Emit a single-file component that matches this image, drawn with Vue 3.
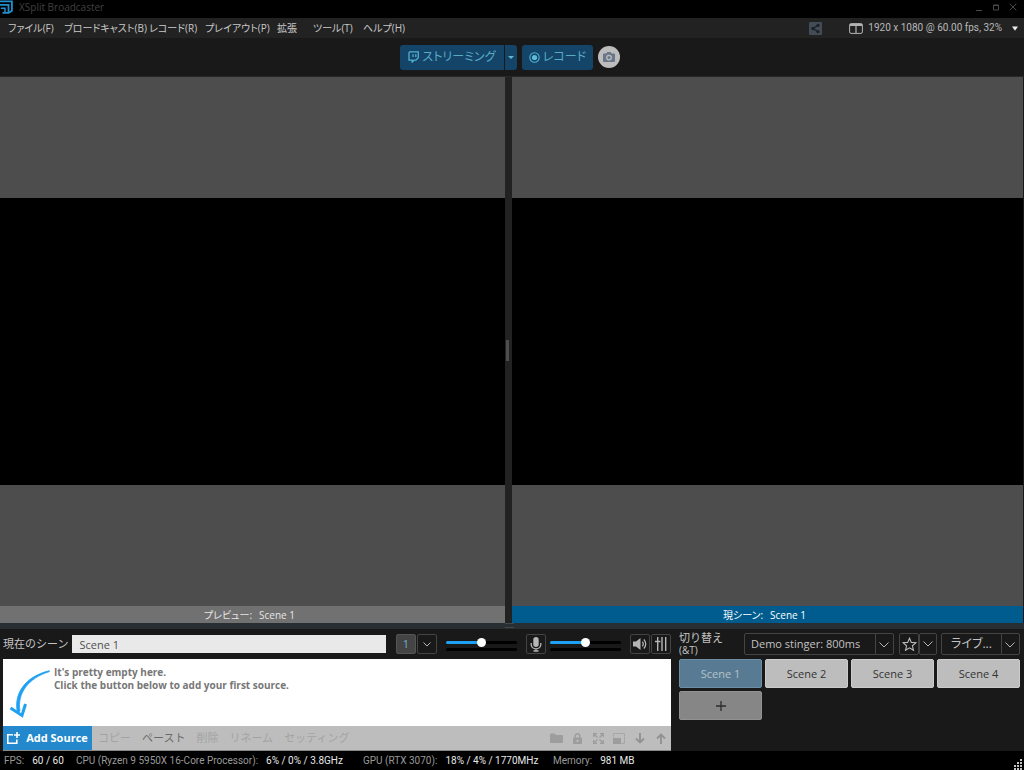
<script setup>
import { ref } from 'vue'

const menus = ['ファイル(F)', 'ブロードキャスト(B)', 'レコード(R)', 'プレイアウト(P)', '拡張', 'ツール(T)', 'ヘルプ(H)']
const scenes = ['Scene 1', 'Scene 2', 'Scene 3', 'Scene 4']
const current = ref('Scene 1')
const mic = ref(50)
const speaker = ref(50)
const actions = [
  { name: 'コピー', enabled: false },
  { name: 'ペースト', enabled: true },
  { name: '削除', enabled: false },
  { name: 'リネーム', enabled: false },
  { name: 'セッティング', enabled: false }
]
const stats = [
  { name: 'FPS:', value: '60 / 60' },
  { name: 'CPU (Ryzen 9 5950X 16-Core Processor):', value: '6% / 0% / 3.8GHz' },
  { name: 'GPU (RTX 3070):', value: '18% / 4% / 1770MHz' },
  { name: 'Memory:', value: '981 MB' }
]
</script>

<template>
  <div class="app">
    <header class="titlebar">
      <svg class="logo" width="13" height="14" viewBox="0 0 13 14" fill="none" stroke="#2190cf" stroke-width="1.8">
        <path d="M0 1.400h11.900v9.400L8.800 12.900H2.500" />
        <path d="M0 4.900h8.500v8" />
        <path d="M.8 8.300h4.200v4.600" stroke-width="1.500" />
      </svg>
      <span class="title">XSplit Broadcaster</span>
      <div class="window-buttons">
        <button aria-label="Minimize"><svg width="8" height="8" viewBox="0 0 8 8"><path d="M1 7.5h6" /></svg></button>
        <button aria-label="Maximize"><svg width="8" height="8" viewBox="0 0 8 8"><path d="M1.5 2h5v5h-5zM1 2.5h6" /></svg></button>
        <button aria-label="Close"><svg width="8" height="8" viewBox="0 0 8 8"><path d="M.7 .7l6.6 6.6M7.3 .7L.7 7.3" /></svg></button>
      </div>
    </header>

    <nav class="menubar">
      <div class="menus">
        <button v-for="m in menus" :key="m">{{ m }}</button>
      </div>
      <button class="share" aria-label="Share">
        <svg width="13" height="13" viewBox="0 0 13 13"><rect width="13" height="13" rx="1" fill="#434c56" /><path d="M9 3.2L4 6.5l5 3.3" fill="none" stroke="#1c2126" stroke-width="1.3" /><g fill="#1c2126"><circle cx="9" cy="3.3" r="1.6" /><circle cx="4" cy="6.5" r="1.7" /><circle cx="9" cy="9.7" r="1.6" /></g></svg>
      </button>
      <button class="resolution">
        <svg width="14" height="11" viewBox="0 0 14 11" fill="none" stroke="#b4b4b4"><rect x=".6" y=".6" width="12.8" height="9.8" rx="1.5" /><path d="M1 2h12" stroke-width="2" /><path d="M7 2v8" stroke-width="1.2" /></svg>
        <span>1920 x 1080 @ 60.00 fps, 32%</span>
        <svg width="6" height="5" viewBox="0 0 6 5"><path d="M0 .5h6L3 4.8z" fill="#eee" /></svg>
      </button>
    </nav>

    <div class="toolbar">
      <div class="split">
        <button class="blue stream">
          <svg width="11" height="12" viewBox="0 0 11 12" fill="none" stroke="#4fb0d0" stroke-width="1.3"><path d="M1.600 .8h8.700v6L7.900 9.200H6L4.200 11V9.200H1V2z" /><path d="M5 3.200v2.900M7.800 3.200v2.900" /></svg>
          <span>ストリーミング</span>
        </button>
        <button class="blue stream-menu" aria-label="ストリーミングのメニュー"><svg width="6" height="3" viewBox="0 0 6 3"><path d="M0 0h6L3 3z" fill="#62b6d2" /></svg></button>
      </div>
      <button class="blue record">
        <svg width="11" height="11" viewBox="0 0 11 11"><circle cx="5.5" cy="5.5" r="4.7" fill="none" stroke="#4fb0d0" stroke-width="1.1" /><circle cx="5.5" cy="5.5" r="2.6" fill="#5dbbd9" /></svg>
        <span>レコード</span>
      </button>
      <button class="camera" aria-label="Screenshot">
        <svg width="12" height="10" viewBox="0 0 12 10"><path d="M1 1.6h2.4L4.2 0h3.6l.8 1.6H11q1 0 1 1V9q0 1-1 1H1Q0 10 0 9V2.600q0-1 1-1z" fill="#6a7788" /><circle cx="6" cy="5.600" r="2.300" fill="#6a7788" stroke="#bdbdbd" stroke-width="1.300" /></svg>
      </button>
    </div>

    <main class="stage">
      <section class="view preview">
        <div class="canvas"><div class="video"></div></div>
        <div class="caption">プレビュー:<span>Scene 1</span></div>
      </section>
      <div class="divider"><i></i></div>
      <section class="view live">
        <div class="canvas"><div class="video"></div></div>
        <div class="caption">現シーン:<span>Scene 1</span></div>
      </section>
    </main>
    <div class="hsplit"><i></i></div>

    <div class="bottom">
      <section class="sources">
        <div class="controls">
          <label for="scene-name">現在のシーン</label>
          <input id="scene-name" class="scene-name" type="text" value="Scene 1" />
          <div class="joined">
            <button class="box number">1</button>
            <button class="box" aria-label="More"><svg width="8" height="5" viewBox="0 0 8 5"><path class="chevron" d="M.5 .5L4 4 7.500 .5" /></svg></button>
          </div>
          <div class="volume">
            <input v-model="mic" type="range" aria-label="Microphone volume" :style="{ '--level': mic + '%' }" />
            <div class="level"></div>
          </div>
          <button class="box mic" aria-label="Microphone">
            <svg width="12" height="15" viewBox="0 0 12 15"><rect x="3.300" width="5.400" height="10" rx="2.700" fill="#b5b5b5" /><path d="M1.200 6v1.500a4.800 4.300 0 0 0 9.600 0V6M6 11.800V14M3.500 14h5" fill="none" stroke="#b5b5b5" stroke-width="1.300" /></svg>
          </button>
          <div class="volume speaker-volume">
            <input v-model="speaker" type="range" aria-label="Speaker volume" :style="{ '--level': speaker + '%' }" />
            <div class="level"></div>
          </div>
          <div class="joined">
            <button class="box" aria-label="Speaker">
              <svg width="15" height="12" viewBox="0 0 15 12"><path d="M0 3.600h3L7.500 0v12L3 8.400H0z" fill="#b5b5b5" /><path d="M9.300 3.800a3 3 0 0 1 0 4.400M10.800 1.600a6 6 0 0 1 0 8.800" fill="none" stroke="#b5b5b5" stroke-width="1.300" /></svg>
            </button>
            <button class="box" aria-label="Mixer">
              <svg width="12" height="14" viewBox="0 0 12 14" fill="none" stroke="#b5b5b5" stroke-width="1.400"><path d="M2.700 0v14M7 0v14M10.700 0v14M0 4.500h5.400" /></svg>
            </button>
          </div>
        </div>

        <div class="list">
          <div class="empty">
            <svg width="42" height="48" viewBox="0 0 42 48" fill="none" stroke="#1ea1f2" stroke-linecap="round"><path d="M41 .8C19 6 5 22 9.500 43L12 41C9 24 20 8 41 1.800z" fill="#1ea1f2" stroke-width=".8" /><path d="M2.500 38L14 45.500 17.500 34" stroke-width="3" stroke-linecap="butt" /></svg>
            <p>It's pretty empty here.<br />Click the button below to add your first source.</p>
          </div>
          <div class="actions">
            <button class="add">
              <svg width="13" height="13" viewBox="0 0 13 13" fill="none" stroke="#fff" stroke-width="1.600"><path d="M6 2.800H.8v8.400h9V7.500M10 0v6M7 3h6" /></svg>
              <span>Add Source</span>
            </button>
            <button v-for="a in actions" :key="a.name" class="act" :disabled="!a.enabled">{{ a.name }}</button>
            <div class="tools">
              <button disabled aria-label="Group"><svg width="13" height="11" viewBox="0 0 13 11"><path d="M0 1.500Q0 .5 1 .5h3.500L6 2h6q1 0 1 1v6q0 1-1 1H1q-1 0-1-1z" /></svg></button>
              <button disabled aria-label="Lock"><svg width="9" height="11" viewBox="0 0 9 11"><path d="M2.200 5V3a2.300 2.300 0 0 1 4.600 0v2" fill="none" stroke="#9d9d9d" stroke-width="1.500" /><path fill-rule="evenodd" d="M1 4.500h7q1 0 1 1V10q0 1-1 1H1q-1 0-1-1V5.500q0-1 1-1zM3.500 7h2v2h-2z" /></svg></button>
              <button disabled aria-label="Expand"><svg width="11" height="11" viewBox="0 0 11 11" fill="none" stroke="#9d9d9d" stroke-width="1.300"><path d="M.7 4V.7H4M7 .7h3.300V4M10.300 7v3.300H7M4 10.300H.7V7M1 1l3.500 3.500M10 1L6.500 4.500M10 10L6.500 6.500M1 10l3.500-3.500" /></svg></button>
              <button disabled aria-label="Position"><svg width="12" height="11" viewBox="0 0 12 11"><path d="M.5 .5h11v10H.5z" fill="none" stroke="#9d9d9d" stroke-dasharray="2 1" /><path d="M0 5h8v6H0z" /></svg></button>
              <button disabled aria-label="Move down"><svg width="10" height="11" viewBox="0 0 10 11" fill="none" stroke="#929292" stroke-width="1.900"><path d="M5 0v9M1 5.500l4 4 4-4" /></svg></button>
              <button disabled aria-label="Move up"><svg width="10" height="11" viewBox="0 0 10 11" fill="none" stroke="#929292" stroke-width="1.900"><path d="M5 11V2M1 5.500l4-4 4 4" /></svg></button>
            </div>
          </div>
        </div>
      </section>

      <section class="scenes">
        <div class="controls transition">
          <label for="transition">切り替え<br /><small>(&amp;T)</small></label>
          <div class="select wide">
            <select id="transition"><option>Demo stinger: 800ms</option></select>
            <svg width="10" height="6" viewBox="0 0 10 6"><path class="chevron" d="M.5 .5L5 5 9.500 .5" /></svg>
          </div>
          <div class="joined">
            <button class="box star" aria-label="Favorites"><svg width="15" height="14" viewBox="0 0 15 14"><path d="M7.500 1.200l1.800 4.200 4.600.4-3.500 3 1.100 4.500-4-2.400-4 2.400 1.100-4.500-3.500-3 4.600-.4z" fill="none" stroke="#bbb" stroke-width="1.100" /></svg></button>
            <button class="box" aria-label="Favorites menu"><svg width="10" height="6" viewBox="0 0 10 6"><path class="chevron" d="M.5 .5L5 5 9.500 .5" /></svg></button>
          </div>
          <div class="select live-select">
            <select aria-label="モード"><option>ライブ...</option></select>
            <svg width="10" height="6" viewBox="0 0 10 6"><path class="chevron" d="M.5 .5L5 5 9.500 .5" /></svg>
          </div>
        </div>
        <div class="scene-grid">
          <button v-for="s in scenes" :key="s" class="scene" :class="{ current: s === current }" @click="current = s">{{ s }}</button>
          <button class="scene new" aria-label="Add scene"><svg width="10" height="10" viewBox="0 0 10 10"><path d="M5 0v10M0 5h10" stroke="#2c2c2c" stroke-width="1.300" /></svg></button>
        </div>
      </section>
    </div>

    <footer class="status">
      <div v-for="s in stats" :key="s.name" class="stat"><span>{{ s.name }}</span><b>{{ s.value }}</b></div>
      <svg class="grip" width="11" height="11" viewBox="0 0 11 11" fill="#c4c4c4"><path d="M8 0h2v2H8zM8 3h2v2H8zM8 6h2v2H8zM8 9h2v2H8zM5 3h2v2H5zM5 6h2v2H5zM5 9h2v2H5zM2 6h2v2H2zM2 9h2v2H2z" /></svg>
    </footer>
  </div>
</template>

<style>
body {
  background: #000;
}
</style>

<style scoped>
.app {
  box-sizing: border-box;
  min-height: 100vh;
  display: flex;
  flex-direction: column;
  background: #191919;
  color: #bdbdbd;
  font-family: "Open Sans", "Noto Sans CJK JP", sans-serif;
  font-size: 11px;
  line-height: 14px;
}
.app * {
  box-sizing: border-box;
}
button, input, select {
  margin: 0;
  padding: 0;
  border: 0;
  background: none;
  color: inherit;
  font: inherit;
}
button {
  display: flex;
  align-items: center;
  justify-content: center;
  white-space: nowrap;
}
svg {
  flex: none;
}
.titlebar {
  display: flex;
  align-items: center;
  height: 18px;
  padding-bottom: 4px;
  background: #000;
}
.title {
  margin-left: 6px;
  font-size: 10px;
  color: #404040;
}
.window-buttons {
  display: flex;
  gap: 9px;
  margin-left: auto;
  padding-right: 7px;
}
.window-buttons path {
  fill: none;
  stroke: #484848;
}
.menubar {
  display: flex;
  align-items: center;
  height: 20px;
  padding: 0 6px 0 8px;
  background: #222;
}
.menus {
  display: grid;
  grid-template-columns: 56px 85px 56px 72px 36px 50px 60px;
  font-size: 10px;
  font-feature-settings: "palt";
  color: #c8c8c8;
}
.menus button {
  justify-content: flex-start;
}
.share {
  margin-left: auto;
}
.resolution {
  gap: 5px;
  margin-left: 27px;
  font-family: Roboto, sans-serif;
  font-size: 10px;
  color: #b8b8b8;
}
.resolution svg:last-child {
  margin-left: 5px;
}
.toolbar {
  display: flex;
  justify-content: center;
  align-items: center;
  gap: 5px;
  height: 39px;
  border-bottom: 1px solid #282828;
  padding-right: 4px;
}
.split {
  display: flex;
  gap: 1px;
}
.blue {
  height: 25px;
  background: #144468;
  color: #58abc6;
  font-size: 12px;
  border-radius: 3px;
  gap: 3px;
}
.stream {
  width: 104px;
  font-feature-settings: "palt";
  border-radius: 3px 0 0 3px;
}
.stream-menu {
  width: 12px;
  border-radius: 0 3px 3px 0;
}
.record {
  width: 71px;
}
.record span {
  font-feature-settings: "palt";
}
.camera {
  width: 22px;
  height: 22px;
  border-radius: 50%;
  background: #bdbdbd;
}
.stage {
  flex: 1;
  display: grid;
  grid-template-columns: minmax(0, 505fr) 7px minmax(0, 511fr);
  min-height: 300px;
  padding-right: 1px;
}
.view {
  display: flex;
  flex-direction: column;
}
.canvas {
  flex: 1;
  display: flex;
  align-items: center;
  background: #4d4d4d;
}
.video {
  width: 100%;
  aspect-ratio: 16 / 9;
  background: #000;
}
.preview .video {
  aspect-ratio: 30 / 17;
}
.caption {
  display: flex;
  justify-content: center;
  align-items: center;
  gap: 7px;
  height: 17px;
  padding-right: 6px;
  background: #717171;
  color: #e6e6e6;
  font-size: 10px;
  font-feature-settings: "palt";
}
.live .caption {
  background: #005c8e;
  color: #fff;
}
.divider {
  display: flex;
  align-items: center;
  padding-left: 1px;
  background: #222;
}
.divider i {
  width: 3px;
  height: 21px;
  background: #4d4d4d;
}
.hsplit {
  display: flex;
  justify-content: center;
  height: 6px;
  padding-right: 5px;
  background: #282e32;
}
.hsplit i {
  width: 9px;
  height: 5px;
  border: solid #43484b;
  border-width: 1px 0;
}
.bottom {
  display: grid;
  grid-template-columns: minmax(0, 668fr) minmax(0, 341fr);
  gap: 8px;
  height: 122px;
  padding: 0 4px 0 3px;
}
.controls {
  display: flex;
  align-items: center;
  height: 30px;
}
.controls label {
  font-size: 11px;
  color: #c3c3c3;
  white-space: nowrap;
}
.scene-name {
  flex: 1;
  min-width: 0;
  height: 18px;
  margin: 0 10px 0 4px;
  padding: 0 7px;
  background: #e9e9e9;
  color: #505050;
}
.joined {
  display: flex;
  gap: 1px;
}
.box {
  width: 20px;
  height: 20px;
  border: 1px solid #444;
  border-radius: 2px;
}
.number {
  background: #444;
  border-color: #555;
  color: #6caecb;
}
.chevron {
  fill: none;
  stroke: #b5b5b5;
}
.volume {
  display: flex;
  flex-direction: column;
  gap: 1px;
  width: 71px;
  margin: 0 9px;
}
.speaker-volume {
  margin-left: 4px;
}
.volume input {
  appearance: none;
  width: 100%;
  height: 9px;
}
.volume input::-webkit-slider-runnable-track {
  height: 3px;
  border-radius: 2px;
  background: linear-gradient(90deg, #1ea1f2 var(--level), #000 var(--level));
}
.volume input::-webkit-slider-thumb {
  appearance: none;
  width: 9px;
  height: 9px;
  margin-top: -3px;
  border-radius: 50%;
  background: #fff;
}
.level {
  height: 3px;
  border-radius: 2px;
  background: #000;
}
.list {
  height: 92px;
  display: flex;
  flex-direction: column;
  background: #fff;
}
.empty {
  flex: 1;
  display: flex;
  gap: 4px;
  padding: 11px 0 0 5px;
  font-weight: 700;
  line-height: 13px;
  color: #777;
}
.empty p {
  margin: -4px 0 0;
  font-size: 10px;
}
.actions {
  display: flex;
  gap: 1px;
  height: 25px;
  border-bottom: 1px solid #888;
  background: #bdbdbd;
}
.add {
  width: 89px;
  gap: 6px;
  background: #2489cc;
  color: #fff;
  font-weight: 700;
}
.act {
  padding: 0 5px;
  color: #6a6a6a;
}
.act:disabled {
  color: #a3a3a3;
}
.tools {
  display: flex;
  align-items: center;
  gap: 1px;
  margin-left: auto;
}
.tools button {
  width: 20px;
  height: 20px;
}
.tools svg {
  fill: #9d9d9d;
}
.tools svg[fill="none"] {
  fill: none;
}
.transition label {
  flex: 1;
  line-height: 12px;
}
.transition small {
  font-size: 10px;
}
.transition .box {
  height: 22px;
}
.transition .joined {
  gap: 0;
}
.transition .joined .box:last-child {
  width: 18px;
}
.select {
  position: relative;
  display: flex;
  height: 22px;
  border: 1px solid #444;
  border-radius: 2px;
}
.select select {
  appearance: none;
  width: 100%;
  padding: 0 20px 0 6px;
  color: #c3c3c3;
}
.select svg {
  position: absolute;
  right: 4px;
  top: 8px;
  pointer-events: none;
}
.select::after {
  content: "";
  position: absolute;
  right: 17px;
  top: 0;
  bottom: 0;
  border-left: 1px solid #444;
  pointer-events: none;
}
.wide {
  width: 150px;
  margin-right: 5px;
}
.live-select {
  width: 79px;
  margin-left: 4px;
}
.live-select select {
  padding-left: 9px;
  font-size: 12px;
  font-feature-settings: "palt";
}
.scene-grid {
  display: grid;
  grid-template-columns: repeat(4, minmax(0, 1fr));
  gap: 3px;
}
.scene {
  height: 29px;
  border: 1px solid #cbcbcb;
  border-radius: 2px;
  background: #bdbdbd;
  color: #333;
}
.scene.current {
  border-color: #6b8fa7;
  background: #587b93;
  color: #b6c2ca;
}
.scene.new {
  border-color: #929292;
  background: #868686;
}
.status {
  display: grid;
  grid-template-columns: 72px 287px 190px 1fr 11px;
  align-items: center;
  height: 19px;
  padding: 0 1px 0 4px;
  background: #000;
  color: #999;
  font-family: Roboto, sans-serif;
  font-size: 10px;
}
.stat {
  display: flex;
  gap: 8px;
  white-space: nowrap;
}
.stat b {
  font-weight: 400;
  color: #e8e8e8;
}
.grip {
  align-self: end;
}
</style>
